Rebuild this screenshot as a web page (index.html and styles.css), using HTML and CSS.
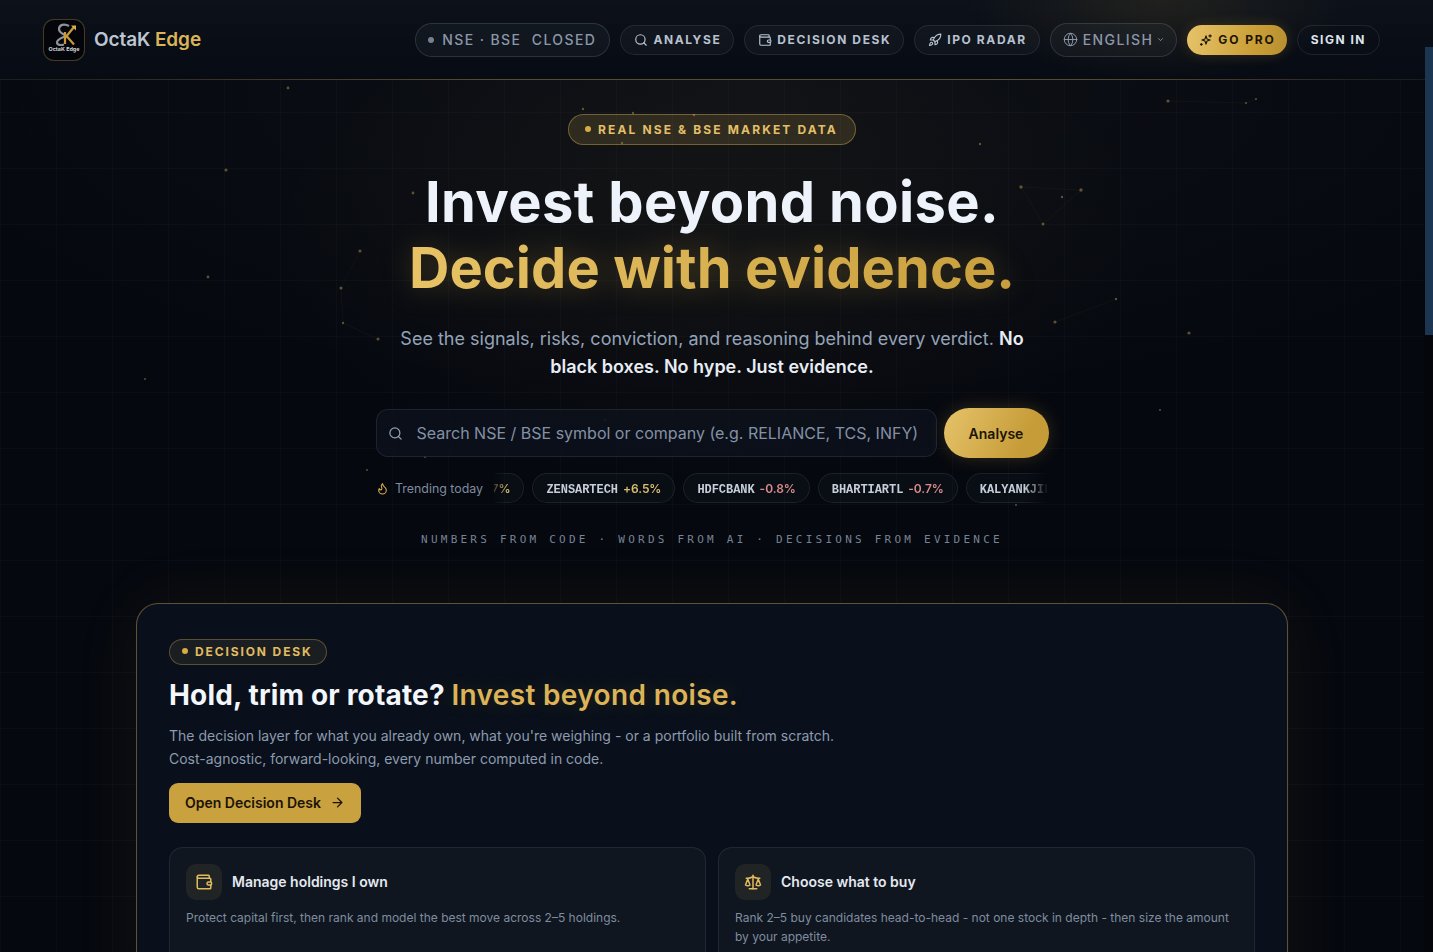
FILE: index.html
```html
<!DOCTYPE html>
<html lang="en">
<head>
<meta charset="utf-8">
<title>OctaK Edge</title>
<link rel="stylesheet" href="styles.css">
</head>
<body>
<div class="page">
  <svg class="particles" width="1433" height="952" viewBox="0 0 1433 952" aria-hidden="true">
    <g class="links">
      <path d="M1021 187 1081 190M1021 187 1043 224 1081 190M1055 322 1116 299M1168 101 1246 103 1256 99M360 251 341 288 343 323 378 339"/>
    </g>
    <g class="dots">
      <circle cx="288" cy="88" r="1.4"/><circle cx="226" cy="170" r="1.6"/><circle cx="208" cy="277" r="1.4"/>
      <circle cx="360" cy="251" r="1.6"/><circle cx="341" cy="288" r="1.6"/><circle cx="343" cy="323" r="1.2"/>
      <circle cx="378" cy="339" r="1.5"/><circle cx="145" cy="379" r="1"/><circle cx="413" cy="193" r="1.4"/>
      <circle cx="1168" cy="101" r="1.6"/><circle cx="1246" cy="103" r="1.1"/><circle cx="1256" cy="99" r="1.1"/>
      <circle cx="1021" cy="187" r="1.7"/><circle cx="1081" cy="190" r="1.7"/><circle cx="1043" cy="224" r="1.5"/>
      <circle cx="1062" cy="197" r="1.2"/><circle cx="980" cy="144" r="1.2"/><circle cx="1189" cy="333" r="1.6"/>
      <circle cx="1055" cy="322" r="1.6"/><circle cx="1116" cy="299" r="1.2"/>
      <circle cx="1160" cy="410" r="1"/><circle cx="1016" cy="505" r="1"/><circle cx="605" cy="420" r="1"/>
      <circle cx="425" cy="457" r="1"/><circle cx="367" cy="470" r="1"/>
      <circle cx="583" cy="109" r="1.2"/><circle cx="633" cy="113" r="1.2"/><circle cx="694" cy="115" r="1.2"/>
      <circle cx="622" cy="143" r="1.2"/>
    </g>
  </svg>

  <header class="topbar">
    <a class="brand">
      <span class="logo">
        <svg viewBox="0 0 40 40" width="40" height="40" aria-hidden="true">
          <path class="logo-steel" d="M25 6C20 3 15 5 15 9c0 4 5 5 7 7-4 2-9 3-9 6.500 0 2.500 4 3 7 2"/>
          <path class="logo-gold" d="M21 12v12M21 18 30 7M23 16.500l7 8"/>
          <path class="logo-arrow" d="M27 5.500h5v5z"/>
        </svg>
        <span class="logo-text">OctaK Edge</span>
      </span>
      <span class="brand-name">OctaK <b>Edge</b></span>
    </a>
    <nav class="nav">
      <span class="status"><i class="status-dot"></i>NSE · BSE&nbsp; CLOSED</span>
      <a class="pill">
        <svg class="ico" viewBox="0 0 24 24"><circle cx="11" cy="11" r="8"/><path d="m21 21-4.3-4.3"/></svg>ANALYSE
      </a>
      <a class="pill">
        <svg class="ico" viewBox="0 0 24 24"><path d="M19 7V4a1 1 0 0 0-1-1H5a2 2 0 0 0 0 4h15a1 1 0 0 1 1 1v4h-3a2 2 0 0 0 0 4h3a1 1 0 0 0 1-1v-2a1 1 0 0 0-1-1"/><path d="M3 5v14a2 2 0 0 0 2 2h15a1 1 0 0 0 1-1v-4"/></svg>DECISION DESK
      </a>
      <a class="pill">
        <svg class="ico" viewBox="0 0 24 24"><path d="M4.500 16.500c-1.500 1.260-2 5-2 5s3.740-.5 5-2c.71-.84.7-2.130-.09-2.910a2.180 2.180 0 0 0-2.910-.09z"/><path d="m12 15-3-3a22 22 0 0 1 2-3.950A12.880 12.880 0 0 1 22 2c0 2.720-.78 7.500-6 11a22.350 22.350 0 0 1-4 2z"/><path d="M9 12H4s.55-3.030 2-4c1.620-1.080 5 0 5 0"/><path d="M12 15v5s3.030-.55 4-2c1.080-1.620 0-5 0-5"/></svg>IPO RADAR
      </a>
      <span class="lang">
        <svg class="ico ico-lang" viewBox="0 0 24 24"><circle cx="12" cy="12" r="10"/><path d="M12 2a14.500 14.500 0 0 0 0 20 14.500 14.500 0 0 0 0-20"/><path d="M2 12h20"/></svg>ENGLISH<svg class="chev" viewBox="0 0 24 24"><path d="m6 9 6 6 6-6"/></svg>
      </span>
      <a class="go-pro">
        <svg class="ico" viewBox="0 0 24 24"><path d="M12 5l1.800 5.200L19 12l-5.200 1.800L12 19l-1.800-5.200L5 12l5.200-1.800z"/><path d="M19 3v4M17 5h4M4 18v3M2.500 19.500h3"/></svg>GO PRO
      </a>
      <a class="sign-in">SIGN IN</a>
    </nav>
  </header>

  <main>
    <section class="hero">
      <span class="eyebrow"><i class="gold-dot"></i>REAL NSE &amp; BSE MARKET DATA</span>
      <h1><span class="h1-white">Invest beyond noise.</span><br><span class="gold-text">Decide with evidence.</span></h1>
      <p class="lede">See the signals, risks, conviction, and reasoning behind every verdict. <strong>No black boxes. No hype. Just evidence.</strong></p>
      <form class="search-row">
        <label class="search-box">
          <svg class="search-ico" viewBox="0 0 24 24"><circle cx="11" cy="11" r="8"/><path d="m21 21-4.300-4.300"/></svg>
          <span class="placeholder">Search NSE / BSE symbol or company (e.g. RELIANCE, TCS, INFY)</span>
        </label>
        <span class="analyse-btn">Analyse</span>
      </form>
      <div class="trending">
        <span class="trend-label">
          <svg class="flame" viewBox="0 0 24 24"><path d="M8.500 14.500A2.500 2.500 0 0 0 11 12c0-1.380-.5-2-1-3-1.070-2.140-.22-4.050 2-6 .5 2.500 2 4.900 4 6.500 2 1.600 3 3.500 3 5.500a7 7 0 1 1-14 0c0-1.150.43-2.290 1-3a2.500 2.500 0 0 0 2.500 2.500z"/></svg>
          Trending today
        </span>
        <div class="ticker">
          <div class="ticker-track">
            <span class="chip chip-first"><b class="up">+1.7%</b></span>
            <span class="chip">ZENSARTECH <b class="up">+6.5%</b></span>
            <span class="chip">HDFCBANK <b class="down">-0.8%</b></span>
            <span class="chip">BHARTIARTL <b class="down">-0.7%</b></span>
            <span class="chip">KALYANKJIL <b class="up">+2.1%</b></span>
          </div>
        </div>
      </div>
      <p class="tagline">NUMBERS FROM CODE · WORDS FROM AI · DECISIONS FROM EVIDENCE</p>
    </section>

    <section class="desk">
      <span class="desk-badge"><i class="gold-dot"></i>DECISION DESK</span>
      <h2><span class="desk-white">Hold, trim or rotate?</span> <span class="desk-gold">Invest beyond noise.</span></h2>
      <p class="desk-copy">The decision layer for what you already own, what you're weighing - or a portfolio built from scratch.<br>Cost-agnostic, forward-looking, every number computed in code.</p>
      <a class="desk-btn">Open Decision Desk
        <svg viewBox="0 0 24 24"><path d="M5 12h14M12 5l7 7-7 7"/></svg>
      </a>
      <div class="cards">
        <article class="card">
          <div class="card-head">
            <span class="card-icon"><svg viewBox="0 0 24 24"><path d="M19 7V4a1 1 0 0 0-1-1H5a2 2 0 0 0 0 4h15a1 1 0 0 1 1 1v4h-3a2 2 0 0 0 0 4h3a1 1 0 0 0 1-1v-2a1 1 0 0 0-1-1"/><path d="M3 5v14a2 2 0 0 0 2 2h15a1 1 0 0 0 1-1v-4"/></svg></span>
            <h3>Manage holdings I own</h3>
          </div>
          <p>Protect capital first, then rank and model the best move across 2–5 holdings.</p>
        </article>
        <article class="card">
          <div class="card-head">
            <span class="card-icon"><svg viewBox="0 0 24 24"><path d="m16 16 3-8 3 8c-.87.65-1.920 1-3 1s-2.130-.35-3-1Z"/><path d="m2 16 3-8 3 8c-.87.65-1.920 1-3 1s-2.130-.35-3-1Z"/><path d="M7 21h10"/><path d="M12 3v18"/><path d="M3 7h2c2 0 5-1 7-2 2 1 5 2 7 2h2"/></svg></span>
            <h3>Choose what to buy</h3>
          </div>
          <p>Rank 2–5 buy candidates head-to-head - not one stock in depth - then size the amount by your appetite.</p>
        </article>
      </div>
    </section>
  </main>

  <div class="scroll-thumb"></div>
</div>
</body>
</html>
```

FILE: styles.css
```css
* { box-sizing: border-box; }
html, body { margin: 0; height: 100%; overflow: hidden; }
body {
  font-family: Inter, "Liberation Sans", sans-serif;
  background: #05080f;
  color: #e8edf5;
}
a { color: inherit; text-decoration: none; }
svg { display: block; }

.page {
  position: relative;
  height: 952px;
  overflow: hidden;
  background-color: #05080f;
  background-image:
    linear-gradient(90deg, transparent 1424px, #04060c 1424px),
    radial-gradient(ellipse 620px 340px at 712px 240px, rgba(205,165,70,.05), transparent 72%),
    radial-gradient(ellipse 900px 330px at 760px 80px, rgba(255,235,190,.035), transparent 100%),
    linear-gradient(rgba(255,255,255,.02) 1px, transparent 1px),
    linear-gradient(90deg, rgba(255,255,255,.02) 1px, transparent 1px);
  background-size: auto, auto, auto, 56px 56px, 56px 56px;
}
.particles { position: absolute; left: 0; top: 0; pointer-events: none; }
.links path { fill: none; stroke: rgba(212,175,85,.045); stroke-width: 1; }
.dots circle { fill: #b3954f; opacity: .5; }

/* Top bar */
.topbar {
  position: relative;
  height: 80px;
  padding: 0 53px 0 43px;
  display: flex;
  align-items: center;
  justify-content: space-between;
  background:
    radial-gradient(ellipse 190px 80px at 1160px 0, rgba(200,160,60,.11), transparent 100%),
    linear-gradient(180deg, #0c111a, #070b13);
  border-bottom: 1px solid;
  border-image: linear-gradient(90deg, rgba(212,175,85,.08), rgba(212,175,85,.38) 35%, rgba(212,175,85,.38) 70%, rgba(212,175,85,.06)) 1;
}
.brand { display: flex; align-items: center; gap: 9px; }
.logo {
  position: relative;
  width: 42px;
  height: 42px;
  border-radius: 11px;
  background: #04050a;
  border: 1px solid rgba(212,175,85,.32);
  display: block;
}
.logo-steel { fill: none; stroke: #8e939b; stroke-width: 2.2; }
.logo-gold { fill: none; stroke: #c9993a; stroke-width: 2.2; }
.logo-arrow { fill: #dcae49; }
.logo-text {
  position: absolute;
  left: 0; right: 0; top: 26px;
  text-align: center;
  font-size: 5.4px;
  font-weight: 700;
  color: #d6d6d6;
  white-space: nowrap;
}
.brand-name {
  font-size: 19px;
  font-weight: 600;
  letter-spacing: -.1px;
  color: #bcc6d3;
}
.brand-name b { font-weight: 600; color: #dcb457; }

.nav { display: flex; align-items: center; gap: 10px; }
.status, .lang {
  height: 34px;
  border: 1px solid rgba(148,163,184,.2);
  border-radius: 17px;
  background: rgba(148,163,184,.055);
  display: flex;
  align-items: center;
  font-size: 14px;
  font-weight: 500;
  letter-spacing: 1.42px;
  color: #8b97a9;
}
.status { padding: 0 13px 0 12px; gap: 8px; }
.status-dot { width: 6px; height: 6px; border-radius: 50%; background: #75808f; }
.lang { padding: 0 11px 0 12px; gap: 5px; }
.pill {
  height: 30px;
  padding: 0 12px 0 13px;
  border: 1px solid rgba(148,163,184,.15);
  border-radius: 15px;
  background: rgba(148,163,184,.05);
  display: flex;
  align-items: center;
  gap: 5px;
  font-size: 12px;
  font-weight: 700;
  letter-spacing: 1.6px;
  color: #b7c1cf;
}
.ico { width: 14px; height: 14px; fill: none; stroke: currentColor; stroke-width: 2; stroke-linecap: round; stroke-linejoin: round; flex: none; }
.ico-lang { width: 15px; height: 15px; stroke-width: 1.6; }
.chev { width: 9px; height: 9px; fill: none; stroke: currentColor; stroke-width: 2.4; margin-left: -2px; }
.go-pro {
  height: 30px;
  padding: 0 11px 0 12px;
  border-radius: 15px;
  background: linear-gradient(100deg, #e6c36a, #c99d35 70%, #b68f31);
  box-shadow: 0 0 14px rgba(212,170,70,.18);
  display: flex;
  align-items: center;
  gap: 5px;
  font-size: 12px;
  font-weight: 700;
  letter-spacing: 1.9px;
  color: #1b1404;
}
.sign-in {
  height: 30px;
  padding: 0 13px;
  border: 1px solid rgba(148,163,184,.15);
  border-radius: 15px;
  display: flex;
  align-items: center;
  font-size: 12px;
  font-weight: 700;
  letter-spacing: 1.5px;
  color: #dfe4ec;
}

/* Hero */
main { position: relative; }
.hero { width: 1424px; display: flex; flex-direction: column; align-items: center; padding-top: 34px; }
.eyebrow {
  height: 31px;
  padding: 0 17px 1px 16px;
  display: flex;
  align-items: center;
  gap: 7px;
  border: 1px solid rgba(212,175,85,.42);
  border-radius: 16px;
  background: rgba(212,175,85,.16);
  font-size: 12px;
  font-weight: 700;
  letter-spacing: 2.13px;
  color: #e2bf68;
}
.gold-dot { width: 6px; height: 6px; border-radius: 50%; background: #d8ac43; flex: none; }
h1 {
  margin: 24px 0 0;
  text-align: center;
  font-size: 56px;
  line-height: 66px;
  font-weight: 700;
  color: #eef3fb;
}
.h1-white { letter-spacing: .38px; }
.gold-text {
  letter-spacing: .05px;
  background: linear-gradient(90deg, #e7c366, #c99f3d);
  -webkit-background-clip: text;
  background-clip: text;
  color: transparent;
  filter: drop-shadow(0 0 14px rgba(212,170,70,.28));
}
.lede {
  width: 640px;
  margin: 24px 0 0;
  text-align: center;
  font-size: 18px;
  line-height: 28px;
  color: #94a3b8;
}
.lede strong { font-weight: 600; color: #e8edf5; }
.search-row { margin-top: 27px; display: flex; align-items: center; gap: 7px; }
.search-box {
  width: 561px;
  height: 48px;
  padding: 0 11px;
  border: 1px solid rgba(148,163,184,.14);
  border-radius: 12px;
  background: rgba(13,18,27,.8);
  display: flex;
  align-items: center;
  gap: 14px;
}
.search-ico { width: 15px; height: 15px; fill: none; stroke: #93a0b2; stroke-width: 2; stroke-linecap: round; flex: none; }
.placeholder { font-size: 16px; color: #8391a5; white-space: nowrap; }
.analyse-btn {
  width: 105px;
  height: 50px;
  border-radius: 25px;
  background: linear-gradient(115deg, #e6c36a, #c69c38 75%);
  box-shadow: 0 0 18px rgba(212,170,70,.22);
  display: flex;
  align-items: center;
  justify-content: center;
  font-size: 14px;
  font-weight: 600;
  color: #1a1405;
}
.trending { margin-top: 15px; width: 672px; display: flex; align-items: center; gap: 11px; }
.trend-label {
  display: flex;
  align-items: center;
  gap: 6px;
  font-size: 12.4px;
  color: #7f8c9f;
  white-space: nowrap;
  flex: none;
}
.flame { width: 13px; height: 13px; fill: none; stroke: #d8ac4f; stroke-width: 2; stroke-linecap: round; stroke-linejoin: round; }
.ticker {
  flex: 1;
  min-width: 0;
  overflow: hidden;
  -webkit-mask-image: linear-gradient(90deg, rgba(0,0,0,.25), #000 14px, #000 calc(100% - 24px), transparent);
  mask-image: linear-gradient(90deg, rgba(0,0,0,.25), #000 14px, #000 calc(100% - 24px), transparent);
}
.ticker-track { display: flex; gap: 8px; margin-left: -40px; }
.chip {
  height: 30px;
  padding: 0 13px;
  border: 1px solid rgba(148,163,184,.13);
  border-radius: 15px;
  background: rgba(148,163,184,.035);
  display: flex;
  align-items: baseline;
  gap: 5px;
  flex: none;
  font-family: "Liberation Mono", "DejaVu Sans Mono", monospace;
  font-size: 12px;
  line-height: 29px;
  font-weight: 700;
  letter-spacing: -.05px;
  color: #c6ced9;
  white-space: nowrap;
}
.chip b { font-family: Inter, sans-serif; font-size: 12px; font-weight: 600; }
.chip-first { padding-left: 20px; }
.up { color: #d9bc6e; }
.down { color: #d98a8a; }
.tagline {
  margin: 30px 0 0;
  font-family: "DejaVu Sans Mono", monospace;
  font-size: 11px;
  letter-spacing: 3.24px;
  color: #778394;
  white-space: nowrap;
}

/* Decision Desk */
.desk {
  width: 1152px;
  height: 420px;
  margin: 57px 0 0 136px;
  padding: 34px 32px 0;
  border: 1px solid rgba(212,175,85,.42);
  border-bottom: 0;
  border-radius: 22px 22px 0 0;
  background: #09101b;
  box-shadow: 0 0 70px rgba(212,170,70,.07);
}
.desk-badge {
  display: inline-flex;
  align-items: center;
  gap: 7px;
  height: 26px;
  padding: 0 13px 1px 12px;
  border: 1px solid rgba(212,175,85,.34);
  border-radius: 13px;
  background: rgba(212,175,85,.09);
  font-size: 12px;
  font-weight: 700;
  letter-spacing: 1.88px;
  color: #e0bc63;
}
h2 {
  margin: 12px 0 0;
  font-size: 28px;
  line-height: 36px;
  font-weight: 700;
  color: #f3f6fb;
}
.desk-white { letter-spacing: .17px; }
.desk-gold {
  color: #dcb457;
  font-weight: 600;
  letter-spacing: .35px;
  text-shadow: 0 0 20px rgba(212,170,70,.2);
}
.desk-copy { margin: 11px 0 0; font-size: 14px; line-height: 23px; color: #8d9bae; }
.desk-btn {
  margin-top: 13px;
  width: 192px;
  height: 40px;
  padding-bottom: 1px;
  border-radius: 9px;
  background: #c9a13e;
  display: flex;
  align-items: center;
  justify-content: center;
  gap: 9px;
  font-size: 14px;
  font-weight: 600;
  color: #1a1304;
}
.desk-btn svg { width: 15px; height: 15px; fill: none; stroke: currentColor; stroke-width: 2; stroke-linecap: round; stroke-linejoin: round; }
.cards { margin-top: 24px; display: grid; grid-template-columns: 1fr 1fr; gap: 12px; }
.card {
  height: 200px;
  padding: 16px;
  border: 1px solid rgba(148,163,184,.13);
  border-radius: 14px;
  background: #0f1620;
}
.card-head { display: flex; align-items: center; gap: 10px; }
.card-icon {
  width: 36px;
  height: 36px;
  border-radius: 10px;
  background: rgba(212,175,85,.09);
  display: flex;
  align-items: center;
  justify-content: center;
}
.card-icon svg { width: 18px; height: 18px; fill: none; stroke: #e2bb5d; stroke-width: 2; stroke-linecap: round; stroke-linejoin: round; }
h3 { margin: 0; font-size: 14px; line-height: 20px; font-weight: 600; color: #e4e9f0; }
.card p { margin: 8px 0 0; font-size: 12px; line-height: 19px; color: #7f8c9f; }

.scroll-thumb {
  position: absolute;
  right: 0;
  top: 47px;
  width: 8px;
  height: 288px;
  background: #1c3550;
}
```
